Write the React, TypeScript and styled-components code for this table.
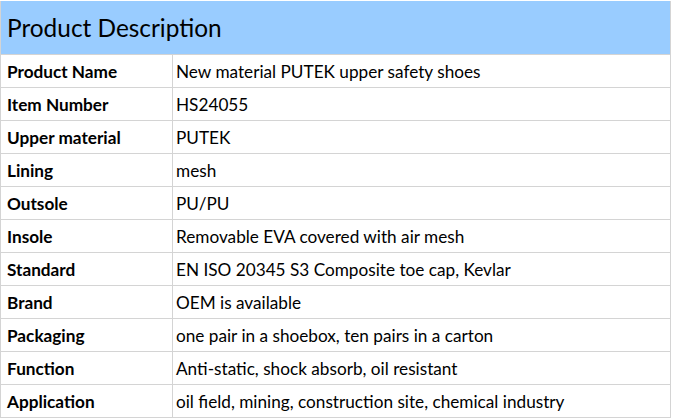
import React from "react";
import styled, { createGlobalStyle } from "styled-components";

const Global = createGlobalStyle`
  html, body { margin: 0; padding: 0; background: #ffffff; }
  body { font-family: Lato, "Liberation Sans", sans-serif; color: #000; }
`;

const Sheet = styled.div`
  display: grid;
  grid-template-columns: 171px 497px;
  gap: 1px;
  width: 669px;
  margin-top: 1px;
  background: #d4d4d4;
  border-left: 1px solid #d4d4d4;
  border-right: 1px solid #d4d4d4;
  border-bottom: 1px solid #d4d4d4;
`;

const Title = styled.div`
  grid-column: 1 / -1;
  height: 53px;
  background: #99ccff;
  display: flex;
  align-items: flex-end;
  padding: 0 0 14px 6px;
  box-sizing: border-box;
  font-size: 24.4px;
  line-height: 1;
`;

const Cell = styled.div<{ $label?: boolean }>`
  height: 32px;
  background: #ffffff;
  display: flex;
  align-items: flex-end;
  box-sizing: border-box;
  padding: 0 0 7px ${(p) => (p.$label ? "6px" : "3px")};
  font-size: 17.2px;
  line-height: 1;
  font-weight: ${(p) => (p.$label ? 700 : 400)};
  white-space: nowrap;
  overflow: hidden;
`;

const rows: [string, string][] = [
  ["Product Name", "New material PUTEK upper safety shoes"],
  ["Item Number", "HS24055"],
  ["Upper material", "PUTEK"],
  ["Lining", "mesh"],
  ["Outsole", "PU/PU"],
  ["Insole", "Removable EVA covered with air mesh"],
  ["Standard", "EN ISO 20345 S3 Composite toe cap, Kevlar"],
  ["Brand", "OEM is available"],
  ["Packaging", "one pair in a shoebox, ten pairs in a carton"],
  ["Function", "Anti-static, shock absorb, oil resistant"],
  ["Application", "oil field, mining, construction site, chemical industry"],
];

export default function App() {
  return (
    <>
      <Global />
      <Sheet>
        <Title>Product Description</Title>
        {rows.map(([k, v]) => (
          <React.Fragment key={k}>
            <Cell $label>{k}</Cell>
            <Cell>{v}</Cell>
          </React.Fragment>
        ))}
      </Sheet>
    </>
  );
}
